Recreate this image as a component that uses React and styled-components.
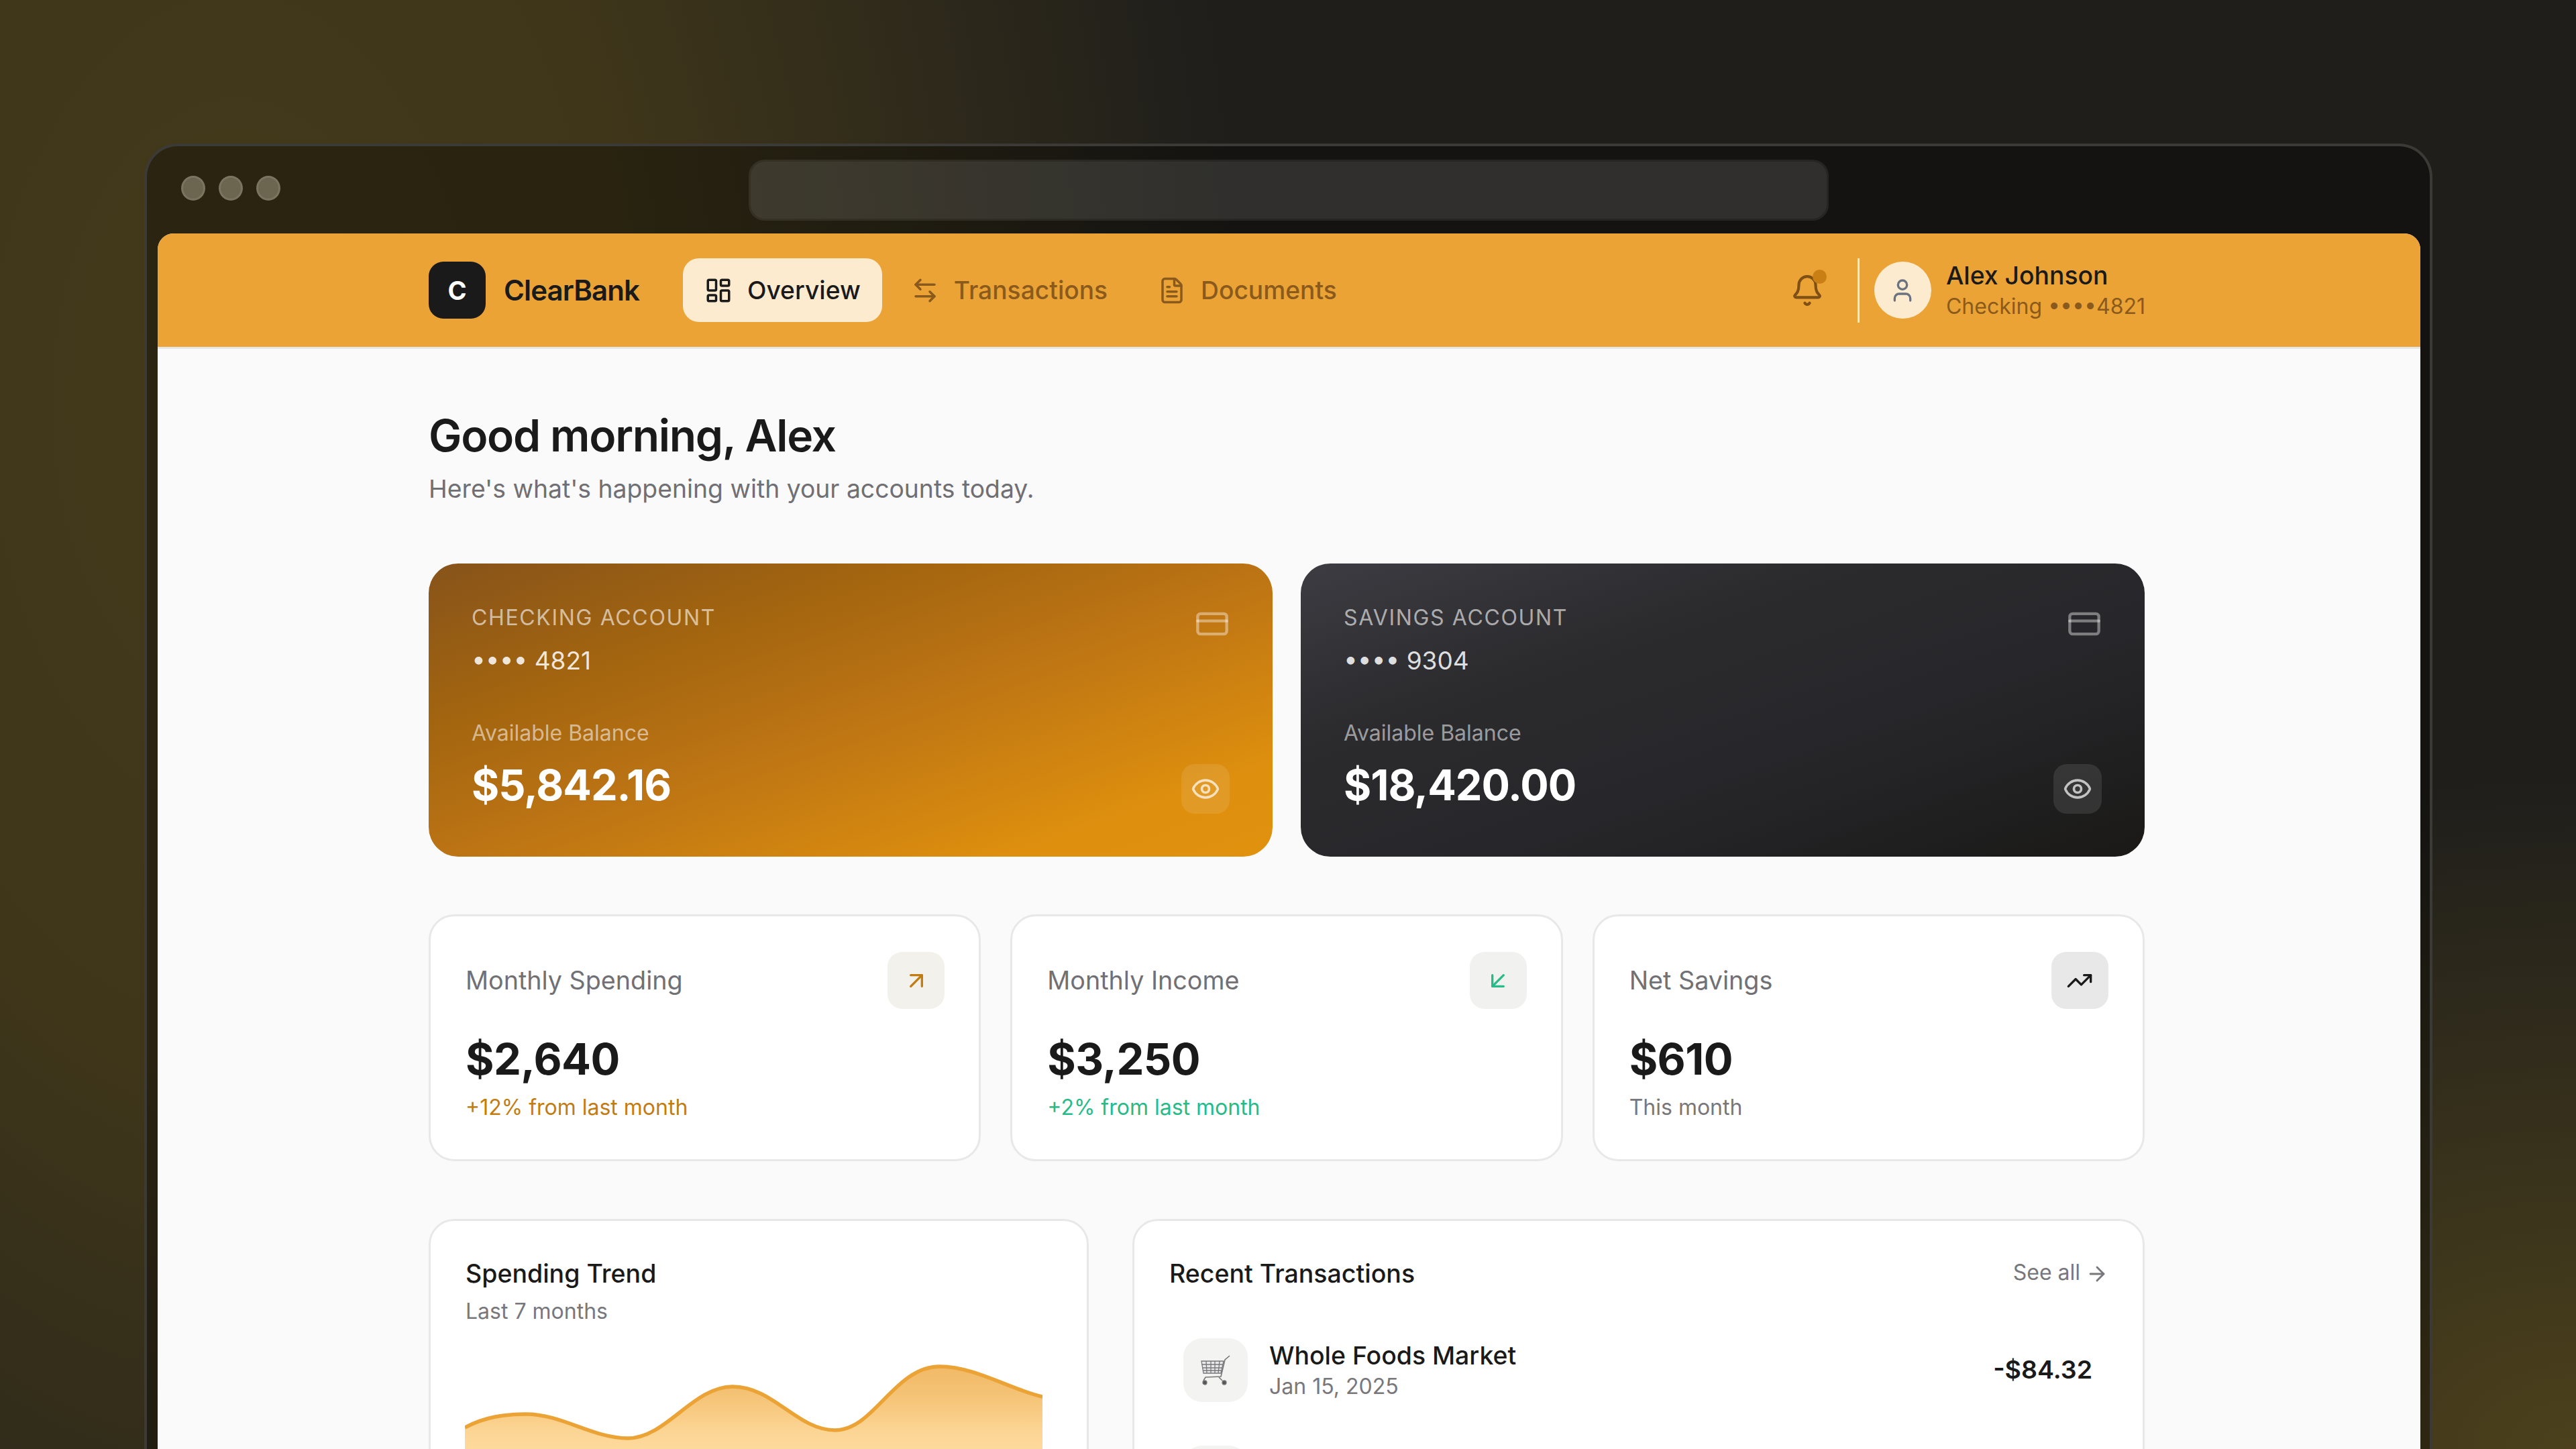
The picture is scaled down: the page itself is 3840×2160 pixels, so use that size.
import styled, { createGlobalStyle } from 'styled-components';
import {
  LayoutDashboard,
  ArrowLeftRight,
  FileText,
  Bell,
  User,
  CreditCard,
  Eye,
  ArrowUpRight,
  ArrowDownLeft,
  TrendingUp,
  ArrowRight,
} from 'lucide-react';

const GlobalStyle = createGlobalStyle`
  html, body {
    margin: 0;
    padding: 0;
    height: 2160px;
    overflow: hidden;
    font-family: Inter, "Liberation Sans", sans-serif;
  }
  * { box-sizing: border-box; }
`;

const Stage = styled.div`
  width: 3840px;
  height: 2160px;
  overflow: hidden;
  padding: 214px 215px 0;
  background:
    radial-gradient(ellipse 1500px 2500px at 350px 600px, #43391a 0, #3f361a 40%, rgba(63, 54, 26, 0) 100%),
    radial-gradient(ellipse 1400px 1000px at 3840px 2160px, #4c411c 0, rgba(76, 65, 28, 0) 100%),
    #1f1e1b;
`;

const BrowserWindow = styled.div`
  width: 3411px;
  min-height: 2100px;
  border: 4px solid #3b3a36;
  border-bottom: 0;
  border-radius: 50px 50px 0 0;
  background: rgba(0, 0, 0, 0.35);
  padding: 0 14px 0 16px;
`;

const TitleBar = styled.div`
  height: 130px;
  margin: 0 -14px 0 -16px;
  padding-top: 20px;
  display: grid;
  grid-template-columns: 1fr 1610px 1fr;
  align-items: start;
`;

const Dots = styled.div`
  display: flex;
  gap: 20px;
  padding: 24px 0 0 51px;
`;

const Dot = styled.span`
  width: 36px;
  height: 37px;
  border-radius: 50%;
  background: #6c6550;
  border: 3px solid rgba(255, 255, 255, 0.1);
`;

const AddressBar = styled.div`
  height: 91px;
  border-radius: 24px;
  background: rgba(255, 255, 255, 0.12);
  background-clip: padding-box;
  border: 3px solid rgba(255, 255, 255, 0.08);
`;

const Viewport = styled.div`
  border-radius: 24px 24px 0 0;
  overflow: hidden;
  background: #fafafa;
  min-height: 1960px;
`;

const Header = styled.header`
  height: 172px;
  padding-left: 404px;
  background: #eca336;
  border-bottom: 3px solid #e5e5e5;
  display: flex;
  align-items: center;
`;

const HeaderInner = styled.div`
  width: 2559px;
  display: flex;
  align-items: center;
  justify-content: space-between;
`;

const Group = styled.div`
  display: flex;
  align-items: center;
`;

const LogoMark = styled.div`
  width: 85px;
  height: 85px;
  border-radius: 22px;
  background: #1a1a1a;
  color: #fff;
  font-size: 38px;
  font-weight: 700;
  display: flex;
  align-items: center;
  justify-content: center;
`;

const LogoText = styled.div`
  margin-left: 27px;
  font-size: 42px;
  font-weight: 600;
  letter-spacing: -0.9px;
  color: #1a1a1a;
`;

const Nav = styled.nav`
  margin-left: 65px;
  display: flex;
  gap: 11px;
`;

const NavItem = styled.div`
  height: 95px;
  padding: 0 32px;
  border-radius: 24px;
  display: flex;
  align-items: center;
  gap: 22px;
  font-size: 37.2px;
  font-weight: 500;
  color: ${(p) => (p.$active ? '#1a1a1a' : '#8a5a1c')};
  background: ${(p) => (p.$active ? '#fdebcf' : 'transparent')};
`;

const BellWrap = styled.div`
  position: relative;
  width: 50px;
  height: 50px;
  color: #7e5015;
  margin-right: 50px;
`;

const BellDot = styled.span`
  position: absolute;
  top: -6px;
  right: -4px;
  width: 21px;
  height: 21px;
  border-radius: 50%;
  background: #c97f14;
`;

const Divider = styled.div`
  width: 3px;
  height: 96px;
  background: #fdebcf;
  margin-right: 22px;
`;

const Avatar = styled.div`
  width: 85px;
  height: 85px;
  border-radius: 50%;
  background: #fdebcf;
  color: #6b7280;
  display: flex;
  align-items: center;
  justify-content: center;
  margin-right: 22px;
`;

const UserName = styled.div`
  font-size: 37.3px;
  font-weight: 500;
  line-height: 46px;
  color: #1a1a1a;
`;

const UserSub = styled.div`
  font-size: 32px;
  line-height: 40px;
  margin-top: 3px;
  color: #8a5a1c;
`;

const Content = styled.main`
  width: 2558px;
  margin-left: 404px;
  padding-top: 91px;
`;

const Title = styled.h1`
  margin: 0;
  font-size: 66px;
  font-weight: 600;
  line-height: 76px;
  letter-spacing: -1.3px;
  color: #1a1a1a;
`;

const Subtitle = styled.p`
  margin: 19px 0 0;
  font-size: 37.3px;
  line-height: 46px;
  color: #6f6f74;
`;

const Accounts = styled.section`
  margin-top: 88px;
  display: grid;
  grid-template-columns: 1258px 1258px;
  gap: 42px;
`;

const AccountCard = styled.div`
  height: 437px;
  padding: 61px 64px 64px 64px;
  border-radius: 44px;
  display: flex;
  flex-direction: column;
  justify-content: space-between;
  color: #fff;
  background: ${(p) =>
    p.$dark
      ? 'linear-gradient(to bottom right, #3c3c42 0%, #2b2b2e 32%, #27272b 60%, #1a1917 100%)'
      : 'linear-gradient(to bottom right, #87531a 0%, #a3650f 28%, #bb7314 50%, #de8f0e 84%, #e0910e 100%)'};
`;

const CardRow = styled.div`
  display: flex;
  justify-content: space-between;
  align-items: ${(p) => (p.$end ? 'flex-end' : 'flex-start')};
`;

const AccountLabel = styled.div`
  font-size: 32px;
  line-height: 40px;
  letter-spacing: 1.65px;
  color: rgba(255, 255, 255, 0.6);
`;

const AccountNumber = styled.div`
  margin-top: 21px;
  font-size: 37px;
  line-height: 46px;
  color: rgba(255, 255, 255, 0.85);
`;

const BalanceLabel = styled.div`
  font-size: 32px;
  line-height: 40px;
  color: rgba(255, 255, 255, 0.55);
`;

const Balance = styled.div`
  margin: 19px 0 5px;
  font-size: 63px;
  font-weight: 700;
  line-height: 76px;
  letter-spacing: -1px;
`;

const CardIcon = styled(CreditCard)`
  margin-top: 3px;
  color: rgba(255, 255, 255, 0.4);
  display: block;
`;

const EyeButton = styled.div`
  width: 72px;
  height: 74px;
  border-radius: 20px;
  background: rgba(255, 255, 255, 0.1);
  color: rgba(255, 255, 255, 0.7);
  display: flex;
  align-items: center;
  justify-content: center;
`;

const Stats = styled.section`
  margin-top: 86px;
  display: grid;
  grid-template-columns: repeat(3, 1fr);
  gap: 44px;
`;

const Panel = styled.div`
  background: #fff;
  border: 3px solid #e8e8e8;
  border-radius: 38px;
`;

const StatCard = styled(Panel)`
  height: 368px;
  padding: 53px 51px 0 52px;
`;

const StatTop = styled.div`
  display: flex;
  align-items: center;
  justify-content: space-between;
`;

const StatLabel = styled.div`
  font-size: 37.7px;
  margin-top: -1px;
  color: #707075;
`;

const StatIcon = styled.div`
  width: 85px;
  height: 85px;
  border-radius: 22px;
  background: ${(p) => p.$bg};
  color: ${(p) => p.$color};
  display: flex;
  align-items: center;
  justify-content: center;
`;

const StatValue = styled.div`
  margin-top: 37px;
  font-size: 65px;
  font-weight: 700;
  line-height: 76px;
  letter-spacing: -0.6px;
  color: #1a1a1a;
`;

const StatNote = styled.div`
  margin-top: 14px;
  font-size: 32px;
  line-height: 40px;
  color: ${(p) => p.$color};
`;

const Lower = styled.section`
  margin-top: 86px;
  display: grid;
  grid-template-columns: 984px 1fr;
  gap: 65px;
`;

const LowerCard = styled(Panel)`
  min-height: 600px;
  padding: 56px 51px 0 52px;
`;

const PanelTitle = styled.div`
  font-size: 37.5px;
  font-weight: 500;
  line-height: 46px;
  color: #1a1a1a;
`;

const PanelSub = styled.div`
  margin-top: 13px;
  font-size: 32px;
  line-height: 40px;
  color: #77777c;
`;

const Chart = styled.svg`
  display: block;
  margin: 47px 0 0 -1px;
`;

const RecentHead = styled.div`
  display: flex;
  justify-content: space-between;
  align-items: center;
`;

const SeeAll = styled.div`
  display: flex;
  align-items: center;
  gap: 8px;
  margin-top: -6px;
  font-size: 32px;
  color: #77777c;
`;

const SeeAllArrow = styled(ArrowRight)`
  margin-top: 6px;
`;

const TxList = styled.div`
  margin-top: 73px;
  display: flex;
  flex-direction: column;
  gap: 65px;
`;

const TxRow = styled.div`
  display: flex;
  align-items: center;
  padding: 0 24px 0 21px;
`;

const TxIcon = styled.div`
  width: 96px;
  height: 95px;
  border-radius: 28px;
  background: #f3f3f1;
  display: flex;
  align-items: center;
  justify-content: center;
  flex: none;
`;

const TxText = styled.div`
  margin-left: 32px;
  flex: 1;
`;

const TxName = styled.div`
  font-size: 37.4px;
  font-weight: 500;
  line-height: 46px;
  color: #1a1a1a;
`;

const TxDate = styled.div`
  margin-top: 3px;
  font-size: 32px;
  line-height: 40px;
  color: #77777c;
`;

const TxAmount = styled.div`
  font-size: 37.5px;
  font-weight: 600;
  margin-top: -3px;
  color: #1a1a1a;
`;

const accounts = [
  { label: 'CHECKING ACCOUNT', number: '•••• 4821', balance: '$5,842.16' },
  { label: 'SAVINGS ACCOUNT', number: '•••• 9304', balance: '$18,420.00', dark: true },
];

const stats = [
  { label: 'Monthly Spending', value: '$2,640', note: '+12% from last month', color: '#c27c12', bg: '#f3f1ec', icon: ArrowUpRight },
  { label: 'Monthly Income', value: '$3,250', note: '+2% from last month', color: '#27bb8a', bg: '#f1f1f0', icon: ArrowDownLeft },
  { label: 'Net Savings', value: '$610', note: 'This month', color: '#77777c', iconColor: '#1a1a1a', bg: '#e8e8e8', icon: TrendingUp },
];

const linePath =
  'M0 106 C 30 90, 60 86, 91 86 C 145 86, 190 122, 243 122 C 300 122, 340 45, 399 45 C 460 45, 495 110, 552 110 C 610 110, 640 15, 708 15 C 760 15, 815 50, 861 60';

function CartIcon() {
  return (
    <svg width="46" height="46" viewBox="0 0 46 46" fill="none" stroke="#77777a" strokeWidth="1.3">
      <path d="M2 9 L35 9 L31 27 L5 27 Z" fill="#e9e9e9" />
      <path d="M2 14 H34 M3 19 H33 M4 23 H32 M9 9 L10 27 M16 9 L16 27 M22 9 L22 27 M29 9 L27 27" />
      <path d="M44 1 L37 7 L31 32 L8 33 L5 38" strokeWidth="1.6" />
      <path d="M28 33 L33 38" strokeWidth="1.6" />
      <circle cx="7" cy="41" r="3" fill="#555" />
      <circle cx="36" cy="41" r="3" fill="#555" />
    </svg>
  );
}

function App() {
  return (
    <Stage>
      <GlobalStyle />
      <BrowserWindow>
        <TitleBar>
          <Dots>
            <Dot />
            <Dot />
            <Dot />
          </Dots>
          <AddressBar />
        </TitleBar>
        <Viewport>
          <Header>
            <HeaderInner>
              <Group>
                <LogoMark>C</LogoMark>
                <LogoText>ClearBank</LogoText>
                <Nav>
                  <NavItem $active>
                    <LayoutDashboard size={42} />
                    Overview
                  </NavItem>
                  <NavItem>
                    <ArrowLeftRight size={42} />
                    Transactions
                  </NavItem>
                  <NavItem>
                    <FileText size={42} />
                    Documents
                  </NavItem>
                </Nav>
              </Group>
              <Group>
                <BellWrap>
                  <Bell size={50} />
                  <BellDot />
                </BellWrap>
                <Divider />
                <Avatar>
                  <User size={40} />
                </Avatar>
                <div>
                  <UserName>Alex Johnson</UserName>
                  <UserSub>Checking ••••4821</UserSub>
                </div>
              </Group>
            </HeaderInner>
          </Header>
          <Content>
            <Title>Good morning, Alex</Title>
            <Subtitle>Here's what's happening with your accounts today.</Subtitle>

            <Accounts>
              {accounts.map((a) => (
                <AccountCard key={a.label} $dark={a.dark}>
                  <CardRow>
                    <div>
                      <AccountLabel>{a.label}</AccountLabel>
                      <AccountNumber>{a.number}</AccountNumber>
                    </div>
                    <CardIcon size={52} />
                  </CardRow>
                  <CardRow $end>
                    <div>
                      <BalanceLabel>Available Balance</BalanceLabel>
                      <Balance>{a.balance}</Balance>
                    </div>
                    <EyeButton>
                      <Eye size={44} />
                    </EyeButton>
                  </CardRow>
                </AccountCard>
              ))}
            </Accounts>

            <Stats>
              {stats.map((s) => (
                <StatCard key={s.label}>
                  <StatTop>
                    <StatLabel>{s.label}</StatLabel>
                    <StatIcon $bg={s.bg} $color={s.iconColor || s.color}>
                      <s.icon size={40} />
                    </StatIcon>
                  </StatTop>
                  <StatValue>{s.value}</StatValue>
                  <StatNote $color={s.color}>{s.note}</StatNote>
                </StatCard>
              ))}
            </Stats>

            <Lower>
              <LowerCard>
                <PanelTitle>Spending Trend</PanelTitle>
                <PanelSub>Last 7 months</PanelSub>
                <Chart width="861" height="240" viewBox="0 0 861 240">
                  <defs>
                    <linearGradient id="trendFill" x1="0" y1="15" x2="0" y2="240" gradientUnits="userSpaceOnUse">
                      <stop offset="0" stopColor="#eca336" stopOpacity="0.75" />
                      <stop offset="0.42" stopColor="#fcd594" />
                      <stop offset="0.6" stopColor="#fddba0" />
                      <stop offset="1" stopColor="#fde3b4" />
                    </linearGradient>
                  </defs>
                  <path d={`${linePath} L861 240 L0 240 Z`} fill="url(#trendFill)" />
                  <path d={linePath} fill="none" stroke="#eca336" strokeWidth="5.5" />
                </Chart>
              </LowerCard>
              <LowerCard>
                <RecentHead>
                  <PanelTitle>Recent Transactions</PanelTitle>
                  <SeeAll>
                    See all
                    <SeeAllArrow size={34} />
                  </SeeAll>
                </RecentHead>
                <TxList>
                  <TxRow>
                    <TxIcon>
                      <CartIcon />
                    </TxIcon>
                    <TxText>
                      <TxName>Whole Foods Market</TxName>
                      <TxDate>Jan 15, 2025</TxDate>
                    </TxText>
                    <TxAmount>-$84.32</TxAmount>
                  </TxRow>
                  <TxRow>
                    <TxIcon />
                  </TxRow>
                </TxList>
              </LowerCard>
            </Lower>
          </Content>
        </Viewport>
      </BrowserWindow>
    </Stage>
  );
}

export default App;
